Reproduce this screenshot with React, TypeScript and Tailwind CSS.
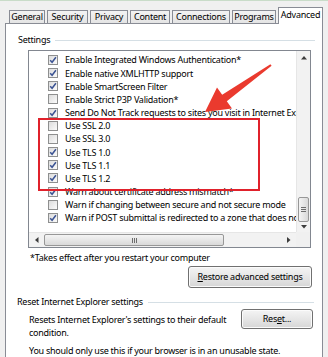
import React from 'react'

const FONT = { fontFamily: '"Noto Sans", "Open Sans", Arial, sans-serif' }

const TABS = [
  { label: 'General', w: 'w-[36px]' },
  { label: 'Security', w: 'w-[41px]' },
  { label: 'Privacy', w: 'w-[38px]' },
  { label: 'Content', w: 'w-[40px]' },
  { label: 'Connections', w: 'w-[58px]' },
  { label: 'Programs', w: 'w-[44px]' },
]

const ITEMS: { label: string; checked: boolean }[] = [
  { label: 'Enable Integrated Windows Authentication*', checked: true },
  { label: 'Enable native XMLHTTP support', checked: true },
  { label: 'Enable SmartScreen Filter', checked: true },
  { label: 'Enable Strict P3P Validation*', checked: false },
  { label: 'Send Do Not Track requests to sites you visit in Internet Explorer*', checked: true },
  { label: 'Use SSL 2.0', checked: false },
  { label: 'Use SSL 3.0', checked: false },
  { label: 'Use TLS 1.0', checked: true },
  { label: 'Use TLS 1.1', checked: true },
  { label: 'Use TLS 1.2', checked: true },
  { label: 'Warn about certificate address mismatch*', checked: true },
  { label: 'Warn if changing between secure and not secure mode', checked: false },
  { label: 'Warn if POST submittal is redirected to a zone that does not permit posts', checked: true },
]

function CheckBox({ checked }: { checked: boolean }) {
  return (
    <div className="w-[10px] h-[10px] shrink-0 border border-[#8e8f8f] bg-gradient-to-br from-[#dcdcdc] to-[#fbfbfb] flex items-center justify-center">
      {checked && (
        <svg width="8" height="8" viewBox="0 0 8 8">
          <path d="M1.2 4.2 L3.1 6.3 L6.9 1.2" fill="none" stroke="#3b5393" strokeWidth="1.5" />
        </svg>
      )}
    </div>
  )
}

function Grip({ vertical }: { vertical?: boolean }) {
  return vertical ? (
    <div className="flex flex-col gap-[1px]">
      <div className="w-[5px] h-px bg-[#6d6d6d]" />
      <div className="w-[5px] h-px bg-[#6d6d6d]" />
      <div className="w-[5px] h-px bg-[#6d6d6d]" />
    </div>
  ) : (
    <div className="flex gap-[1px]">
      <div className="w-px h-[5px] bg-[#6d6d6d]" />
      <div className="w-px h-[5px] bg-[#6d6d6d]" />
      <div className="w-px h-[5px] bg-[#6d6d6d]" />
    </div>
  )
}

function Tri({ dir }: { dir: 'up' | 'down' | 'left' | 'right' }) {
  const pts = {
    up: '0,3.5 3,0 6,3.5',
    down: '0,0 3,3.5 6,0',
    left: '3.5,0 0,3 3.5,6',
    right: '0,0 3.5,3 0,6',
  }[dir]
  const horiz = dir === 'left' || dir === 'right'
  return (
    <svg width={horiz ? 4 : 6} height={horiz ? 6 : 4} viewBox={horiz ? '0 0 4 6' : '0 0 6 4'}>
      <polygon points={pts} fill="#3c3c3c" />
    </svg>
  )
}

function ListBox() {
  return (
    <div className="ml-[22px] mt-[4px] w-[283px] h-[198px] border border-[#828790] bg-white flex flex-col">
      <div className="flex flex-1 min-h-0">
        <div className="flex-1 min-w-0 overflow-hidden pt-[2.4px]">
          {ITEMS.map((it) => (
            <div key={it.label} className="h-[13.17px] flex items-center pl-[19px] whitespace-nowrap">
              <CheckBox checked={it.checked} />
              <span className="ml-[7px] text-[9px] tracking-[-0.25px] leading-[13px] text-black">{it.label}</span>
            </div>
          ))}
        </div>
        {/* vertical scrollbar */}
        <div className="w-[14px] bg-[#f2f2f2] border-l border-[#e6e6e6] flex flex-col items-center">
          <div className="h-[14px] flex items-center justify-center">
            <Tri dir="up" />
          </div>
          <div className="flex-1" />
          <div className="w-[11px] h-[25px] rounded-[2px] border border-[#979797] bg-gradient-to-r from-[#f4f4f4] to-[#d9d9d9] flex items-center justify-center">
            <Grip vertical />
          </div>
          <div className="h-[10px] flex items-center justify-center">
            <Tri dir="down" />
          </div>
        </div>
      </div>
      {/* horizontal scrollbar */}
      <div className="h-[15px] flex">
        <div className="flex-1 bg-[#f2f2f2] border-t border-[#e6e6e6] flex items-center">
          <div className="w-[15px] flex items-center justify-center">
            <Tri dir="left" />
          </div>
          <div className="w-[180px] h-[12px] rounded-[2px] border border-[#979797] bg-gradient-to-b from-[#f4f4f4] to-[#d9d9d9] flex items-center justify-center">
            <Grip />
          </div>
          <div className="flex-1" />
          <div className="w-[15px] flex items-center justify-center">
            <Tri dir="right" />
          </div>
        </div>
        <div className="w-[14px] bg-[#f0f0f0]" />
      </div>
    </div>
  )
}

function Button({ children, className }: { children: React.ReactNode; className: string }) {
  return (
    <div
      className={`${className} rounded-[3px] border border-[#707070] bg-gradient-to-b from-[#f4f4f4] via-[#e6e6e6] to-[#d6d6d6] flex items-center justify-center text-[9px] tracking-[-0.25px] text-black shadow-[inset_0_0_0_1px_#fbfbfb]`}
    >
      {children}
    </div>
  )
}

export default function App() {
  return (
    <div
      className="relative w-[328px] h-[357px] overflow-hidden bg-[#f0f0f0] border-t border-[#c9dcc9] text-[9px] tracking-[-0.25px]"
      style={FONT}
    >
      {/* tabs */}
      <div className="h-[22px] flex items-end pl-[9px] gap-[2px]">
        {TABS.map((t) => (
          <div
            key={t.label}
            className={`${t.w} h-[13px] border border-b-0 border-[#898c95] bg-gradient-to-b from-[#f3f3f3] to-[#e4e4e4] flex items-center justify-center text-black whitespace-nowrap`}
          >
            {t.label}
          </div>
        ))}
        <div className="w-[45px] h-[17px] -mb-px relative z-10 border border-b-0 border-[#898c95] bg-white flex items-center justify-center text-black pb-[2px]">
          Advanced
        </div>
      </div>

      {/* panel */}
      <div className="ml-[5px] w-[318px] h-[340px] border border-[#898c95] bg-white pt-[10px]">
        <div className="flex items-center h-[12px] pl-[12px]">
          <span className="text-black leading-[12px]">Settings</span>
          <div className="flex-1 h-px bg-[#d5dfe5] ml-[5px] mr-[7px]" />
        </div>

        <ListBox />

        <div className="mt-[4px] pl-[24px] leading-[12px] text-black">
          *Takes effect after you restart your computer
        </div>

        <Button className="ml-[182px] mt-[2px] w-[124px] h-[22px]">
          <span>
            <span className="underline">R</span>estore advanced settings
          </span>
        </Button>

        <div className="flex items-center h-[12px] mt-[8px] pl-[11px]">
          <span className="text-black leading-[12px]">Reset Internet Explorer settings</span>
          <div className="flex-1 h-px bg-[#d5dfe5] ml-[5px] mr-[8px]" />
        </div>

        <div className="flex mt-[1px] pl-[23px]">
          <div className="w-[205px] pt-[3.5px] leading-[13px] text-black">
            Resets Internet Explorer's settings to their default condition.
          </div>
          <Button className="ml-[7px] w-[72px] h-[20px]">
            <span>
              Res<span className="underline">e</span>t...
            </span>
          </Button>
        </div>

        <div className="mt-[5px] pl-[23px] leading-[13px] text-black whitespace-nowrap">
          You should only use this if your browser is in an unusable state.
        </div>
      </div>

      {/* annotation overlay */}
      <div className="absolute left-[38px] top-[117px] w-[222px] h-[73px] border-2 border-[#e0212b] pointer-events-none" />
      <svg className="absolute left-0 top-0 pointer-events-none" width="328" height="357" viewBox="0 0 328 357">
        <polygon
          points="271.6,64.8 226.8,100.3 232,107.6 205,111 217,86.4 222.2,93.7 270.4,63.2"
          fill="#ea3a2e"
        />
      </svg>
    </div>
  )
}
